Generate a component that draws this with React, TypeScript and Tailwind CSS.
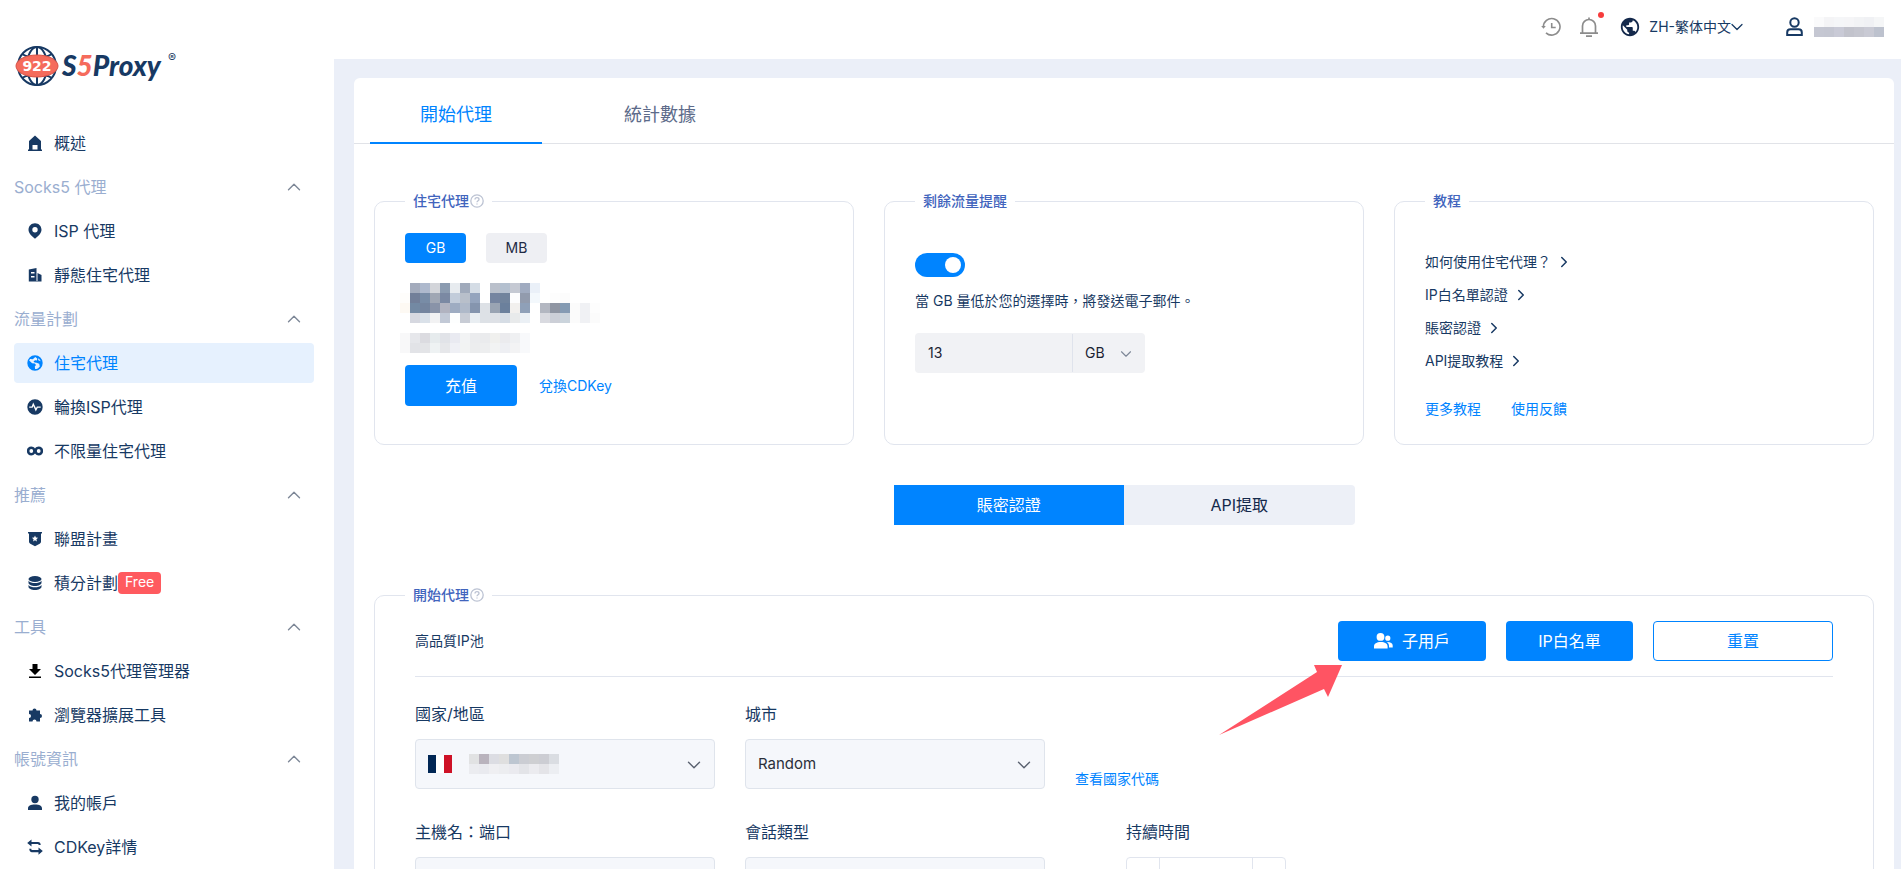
import React, { useState } from 'react';
import { ChevronDown, ChevronRight, ChevronUp } from 'lucide-react';
import { MdPublic } from 'react-icons/md';

const FONT = 'font-[Inter,"Noto_Sans_CJK_TC",sans-serif] font-normal';

type IconName = 'home' | 'pin' | 'building' | 'globe' | 'pulse' | 'infinity' | 'badge' | 'coins' | 'download' | 'puzzle' | 'user' | 'swap';

interface NavEntry {
    label: string;
    icon: IconName;
    active?: boolean;
    tag?: string;
}

interface NavSection {
    title?: string;
    items: NavEntry[];
}

const sections: NavSection[] = [
    { items: [{ label: '概述', icon: 'home' }] },
    {
        title: 'Socks5 代理',
        items: [
            { label: 'ISP 代理', icon: 'pin' },
            { label: '靜態住宅代理', icon: 'building' },
        ],
    },
    {
        title: '流量計劃',
        items: [
            { label: '住宅代理', icon: 'globe', active: true },
            { label: '輪換ISP代理', icon: 'pulse' },
            { label: '不限量住宅代理', icon: 'infinity' },
        ],
    },
    {
        title: '推薦',
        items: [
            { label: '聯盟計畫', icon: 'badge' },
            { label: '積分計劃', icon: 'coins', tag: 'Free' },
        ],
    },
    {
        title: '工具',
        items: [
            { label: 'Socks5代理管理器', icon: 'download' },
            { label: '瀏覽器擴展工具', icon: 'puzzle' },
        ],
    },
    {
        title: '帳號資訊',
        items: [
            { label: '我的帳戶', icon: 'user' },
            { label: 'CDKey詳情', icon: 'swap' },
        ],
    },
];

const navIcons: Record<IconName, React.ReactNode> = {
    home: <path fillRule="evenodd" d="M8 .5 14 6v8.500h1V16H1v-1.500h1V6L8 .5zM5.500 10v4.500h5V10h-5z" />,
    pin: <path fillRule="evenodd" d="M8 .3c3.800 0 6.500 2.900 6.500 6.500 0 3.700-3.400 6.400-6.500 8.900-3.100-2.500-6.500-5.200-6.500-8.900C1.500 3.200 4.200.3 8 .3zM8 4a2.700 2.700 0 1 0 0 5.400A2.700 2.700 0 0 0 8 4z" />,
    building: <path fillRule="evenodd" d="M1.800 2.500 9.500 1v13h1V6l4 2v6.500H1.800v-12zM4 5v1.500h3.500V5H4zm0 4v1.500h3.500V9H4z" />,
    globe: <path fillRule="evenodd" d="M8 .3a7.700 7.700 0 1 1 0 15.400A7.700 7.700 0 0 1 8 .3zM2.200 5.600l2.900 2.600 2.700.3 1.200 1.400-1.200 1.600.3 2.500c2 0 3.600-1 4.700-2.600l-.6-2.600-2.600-1-2-.4L6.500 6.200l1.800-1 1.700.400.2-2L8.300 2 5.800 4.200l-2.700-.2a6 6 0 0 0-.9 1.600zm8.900-2.400.200 2 2.400 1a6 6 0 0 0-2.600-3z" />,
    pulse: <path fillRule="evenodd" d="M8 .3a7.700 7.700 0 1 1 0 15.400A7.700 7.700 0 0 1 8 .3zM6.200 3.600 4.700 7.400H2.200v1.400h3.400l.8-1.800 2.400 5.400 1.900-3.600h3V7.400H9.900L9 9.300 6.200 3.600z" />,
    infinity: <path fillRule="evenodd" d="M4.300 3.500c1.500 0 2.700.7 3.700 1.900 1-1.200 2.200-1.900 3.700-1.900a4.500 4.500 0 0 1 0 9c-1.500 0-2.700-.7-3.700-1.900-1 1.200-2.200 1.900-3.700 1.900a4.500 4.500 0 0 1 0-9zm0 2.600a1.900 1.900 0 1 0 0 3.800 1.900 1.900 0 0 0 0-3.800zm7.400 0a1.900 1.900 0 1 0 0 3.800 1.900 1.900 0 0 0 0-3.800z" />,
    badge: <path fillRule="evenodd" d="M1 1h14v1.500h-1v8c0 1-.5 1.700-1.300 2.200L8 15.200l-4.700-2.500C2.500 12.200 2 11.500 2 10.500v-8H1V1zm7 3.500-.9 2-2.200.2 1.700 1.500-.5 2.200L8 9.300l1.900 1.100-.5-2.200 1.700-1.500-2.200-.2L8 4.500z" />,
    coins: (
        <>
            <ellipse cx="8" cy="4" rx="6.500" ry="3" />
            <path d="M1.500 5.800C3 7.800 5.300 8 8 8s5-.2 6.500-2.200v2C14.500 9.600 11.600 11 8 11S1.500 9.600 1.500 7.800v-2z" />
            <path d="M1.500 10C3 12 5.300 12.200 8 12.200s5-.2 6.500-2.200v1.800c0 1.900-2.900 3.200-6.500 3.200s-6.500-1.300-6.500-3.200V10z" />
        </>
    ),
    download: <path d="M5.500 1h5v5H14l-6 6-6-6h3.500V1zM2 13.500h12V15H2v-1.500z" />,
    puzzle: <path d="M2 3.500h3.500a2 2 0 1 1 4 0H13V7a2 2 0 1 1 0 4v3.500H9.500a2 2 0 0 0-4 0H2V11a2 2 0 0 0 0-4V3.500z" />,
    user: <path d="M8 .8a3.700 3.700 0 1 1 0 7.400A3.700 3.700 0 0 1 8 .8zM1 15v-1.500C1 11 3.500 9.600 8 9.600s7 1.400 7 3.900V15H1z" />,
    swap: <path d="M4.500.5v2.600H11c1.700 0 2.700 1 2.700 2.900h-2c0-.6-.3-.9-1-.9H4.500v2.300L.2 4 4.500.5zm7 8v2.500h-6.200c-.7 0-1-.4-1-1.200h-2c0 2.200 1 3.500 2.700 3.500h6.500v2.500L15.800 12 11.500 8.500z" />,
};

const Logo = () => {
    return (
        <svg width="164" height="44" viewBox="0 0 164 44" role="img" aria-label="922 S5Proxy">
            <g fill="none" stroke="#173963" strokeWidth="2">
                <circle cx="23" cy="22" r="19" />
                <ellipse cx="23" cy="22" rx="10" ry="19" />
                <path d="M23 3v38M8 10c8 5 22 5 30 0M8 34c8-5 22-5 30 0" />
            </g>
            <ellipse cx="23" cy="22" rx="21" ry="11" fill="#f56b5c" stroke="#d95347" strokeWidth="1" />
            <text x="23" y="27" textAnchor="middle" fill="#fff" fontFamily="DejaVu Sans" fontWeight="700" fontSize="14">922</text>
            <text x="48" y="32" fontFamily="Lato" fontWeight="900" fontStyle="italic" fontSize="28" fill="#173963">
                S<tspan fill="#f56b5c">5</tspan>Proxy
            </text>
            <text x="158" y="18" textAnchor="middle" fontFamily="Inter" fontSize="12" fill="#173963">®</text>
        </svg>
    );
};

const NavItem = ({ label, icon, active, tag }: NavEntry) => {
    return (
        <li>
            <a
                href="#"
                className={
                    active
                        ? 'flex h-10 items-center rounded bg-[#e6f1fe] pl-[13px] text-base text-[#0084ff]'
                        : 'flex h-10 items-center rounded pl-[13px] text-base text-[#173963]'
                }
            >
                <svg
                    className={icon === 'download' ? 'mr-[11px] size-4 fill-black' : 'mr-[11px] size-4 fill-current'}
                    viewBox="0 0 16 16"
                    aria-hidden="true"
                >
                    {navIcons[icon]}
                </svg>
                {label}
                {tag && <span className="h-[22px] rounded bg-[#ff5a5f] px-[7px] text-sm leading-5 text-white">{tag}</span>}
            </a>
        </li>
    );
};

const Sidebar = () => {
    return (
        <aside className="w-[334px] shrink-0 bg-white pt-[44px] pl-[14px]">
            <Logo />
            <nav className="mt-[35px] flex w-[300px] flex-col gap-1">
                {sections.map((section) => (
                    <div key={section.title ?? 'main'} className="flex flex-col gap-1">
                        {section.title && (
                            <button type="button" className="flex h-10 items-center justify-between pr-[9px] text-base text-[#9aaed0]">
                                {section.title}
                                <ChevronUp className="size-[22px] text-[#7d8797]" strokeWidth={1.5} />
                            </button>
                        )}
                        <ul className="flex flex-col gap-1">
                            {section.items.map((item) => <NavItem key={item.label} {...item} />)}
                        </ul>
                    </div>
                ))}
            </nav>
        </aside>
    );
};

// Masked values are shown as rows of 10px colour cells
const Mosaic = ({ rows }: { rows: string[] }) => {
    return (
        <div aria-hidden="true">
            {rows.map((row, y) => (
                <div key={y} className="flex">
                    {row.split(' ').map((color, x) => (
                        <span key={x} className="size-[10px]" style={{ backgroundColor: color === '-' ? undefined : `#${color}` }} />
                    ))}
                </div>
            ))}
        </div>
    );
};

const balanceMask = [
    '- a3abbc aeb9cd d3d5da 8b9bb0 e7ebef a0aabb d4dce5 - bac0cb b4c0cf c5c9d3 a0abc0 eaf0f8',
    'fefdfb 727f99 788ca6 a0a7b4 7b89a3 c2ccda b8bfca 94a4bd - 7685a0 71849d fdfdfe 929bad f3f8fc - fdfdfd fcfcfc',
    'fdf9f3 7389a3 74859f 8993a8 b1b3c0 9eacc2 afb9c9 8595ae dde1e6 9aa4b3 6b809c f2f0ee 8fa0b8 - b3b7c1 8f95a2 859bb3 fbfbfb f0f1f4 fdfdfd',
    '- d6d8e0 dae1e9 f2f2f3 c2c9d6 fdfefe c8ccd5 e9eef2 dde1e6 dee1e6 d6dde5 e8eaeb ebf0f5 - d9dae0 cccfd7 cbd4dc fbfbfb f0f1f4 fbfbfb',
];

const expiryMask = [
    'f8f8f9 e6e7eb dbdbe0 e6ebed e1e3e8 e9eaf1 f2f3f4 ebecee eaebed f0f0ee ebebee eff0f2 f8f9fb',
    'f8f8f9 e2e3e7 e3e4e7 eef2f3 e6e7ea eff0f5 f2f3f3 ecedee edeeef f2f3f3 eeeff3 f3f3f4 f8f9fb',
];

const countryMask = [
    'e1e2e3 b9b3bd dcdde3 dfdfdf bdc6d1 cbcdd3 cecfd2 cccdd3 dadde2',
    'ebecf0 e9eaef efeff2 ecedf0 eaeaef e3e4e8 ebebef e4e4e8 eceef2',
];

const userMask = [
    'fafafb f4f4f6 f5f6f8 f5f5f7 f2f3f5 f0f1f4 f5f6f7',
    'c5c7d2 c4c6d1 c9cad6 c2c3cc c5c6cf c9cad4 bdc2ce',
];

const Header = () => {
    return (
        <header className="flex h-[59px] items-center justify-end bg-white pr-[17px] pb-[6px]">
            <button type="button" aria-label="歷史" className="text-[#8c8c8c]">
                <svg className="size-5" viewBox="0 0 20 20" fill="none" stroke="currentColor" strokeWidth="1.600" aria-hidden="true">
                    <path d="M2.400 10A8.300 8.300 0 1 1 5 15.800M10.700 6v4.500h4" />
                    <path d="M.2 9h4.600l-2.300 2.800z" fill="currentColor" stroke="none" />
                </svg>
            </button>
            <button type="button" aria-label="通知" className="relative ml-[18px] text-[#8c8c8c]">
                <svg className="size-5" viewBox="0 0 20 20" fill="none" stroke="currentColor" strokeWidth="1.700" aria-hidden="true">
                    <path d="M10 .5v2M3.500 16V9a6.500 6.500 0 0 1 13 0v7M1 16.200h18M7 19.100h6" />
                </svg>
                <span className="absolute -top-[5px] -right-[5px] size-[6px] rounded-full bg-[#f73c3c]" />
            </button>
            <button type="button" className="ml-[20px] flex items-center text-sm text-[#173963]">
                <MdPublic className="mr-[8px] size-[22px] text-[#14294b]" />
                ZH-繁体中文
                <ChevronDown className="-mx-1 size-5" strokeWidth={1.5} />
            </button>
            <button type="button" aria-label="帳戶" className="ml-[43px] flex items-center gap-[11px] text-[#173963]">
                <svg className="h-[19px] w-[17px]" viewBox="0 0 17 19" fill="none" stroke="currentColor" strokeWidth="2" aria-hidden="true">
                    <circle cx="8.500" cy="5.500" r="4.200" />
                    <path d="M1.200 18v-2.500c0-2 1.300-3.200 3.300-3.200h8c2 0 3.300 1.200 3.300 3.200V18z" />
                </svg>
                <Mosaic rows={userMask} />
            </button>
        </header>
    );
};

const HelpIcon = () => {
    return (
        <svg className="size-[14px]" viewBox="0 0 14 14" fill="none" stroke="#bcc3d3" strokeWidth="1.300" aria-hidden="true">
            <circle cx="7" cy="7" r="6.200" />
            <path d="M5 5.600C5 4.400 5.800 3.700 7 3.700s2 .7 2 1.700c0 1.300-2 1.400-2 2.900M7 9.400v1.200" />
        </svg>
    );
};

interface PanelProps {
    title: string;
    help?: boolean;
    className?: string;
    children: React.ReactNode;
}

const Panel = ({ title, help, className = '', children }: PanelProps) => {
    return (
        <fieldset className={`min-w-0 rounded-[10px] border border-[#e1e5ee] ${className}`}>
            <legend className="ml-[30px] px-2 text-sm font-medium text-[#4164bd]">
                <span className="flex items-center gap-px">
                    {title}
                    {help && <HelpIcon />}
                </span>
            </legend>
            {children}
        </fieldset>
    );
};

const BalancePanel = () => {
    const [unit, setUnit] = useState('GB');
    return (
        <Panel title="住宅代理" help className="h-[254px]">
            <div className="pt-[22px] pl-[30px]">
                <div className="flex gap-5">
                    {['GB', 'MB'].map((u) => (
                        <button
                            key={u}
                            type="button"
                            onClick={() => setUnit(u)}
                            className={
                                u === unit
                                    ? 'h-[30px] w-[61px] rounded bg-[#0084ff] text-sm text-white'
                                    : 'h-[30px] w-[61px] rounded bg-[#eeeff3] text-sm text-[#1f2b45]'
                            }
                        >
                            {u}
                        </button>
                    ))}
                </div>
                <div className="mt-5 -ml-[5px] flex flex-col gap-[10px]">
                    <Mosaic rows={balanceMask} />
                    <Mosaic rows={expiryMask} />
                </div>
                <div className="mt-[12px] flex items-center gap-[22px]">
                    <button type="button" className="h-[41px] w-[112px] rounded bg-[#0084ff] text-base text-white">充值</button>
                    <a href="#" className="text-sm text-[#0084ff]">兌換CDKey</a>
                </div>
            </div>
        </Panel>
    );
};

const ReminderPanel = () => {
    return (
        <Panel title="剩餘流量提醒" className="h-[254px]">
            <div className="pt-[42px] pl-[30px]">
                <label className="block w-fit">
                    <input type="checkbox" defaultChecked aria-label="剩餘流量提醒" className="peer sr-only" />
                    <span className="flex h-6 w-[50px] items-center justify-start rounded-full bg-[#c3cad8] px-1 peer-checked:justify-end peer-checked:bg-[#0084ff]">
                        <span className="size-4 rounded-full bg-white" />
                    </span>
                </label>
                <p className="mt-[14px] text-sm text-[#173963]">當 GB 量低於您的選擇時，將發送電子郵件。</p>
                <div className="mt-[22px] flex h-10 w-[230px] rounded-sm bg-[#f1f2f5] text-[#1c2333]">
                    <input type="text" aria-label="流量" defaultValue="13" className="min-w-0 flex-1 pl-[13px] text-sm" />
                    <div className="relative my-px w-[73px] border-l border-[#dfe3ec]">
                        <select aria-label="單位" className="size-full appearance-none pl-3 text-sm">
                            <option>GB</option>
                            <option>MB</option>
                        </select>
                        <ChevronDown className="pointer-events-none absolute top-[11px] right-[10px] size-[18px] text-[#7d8797]" strokeWidth={1.5} />
                    </div>
                </div>
            </div>
        </Panel>
    );
};

const guides = ['如何使用住宅代理？', 'IP白名單認證', '賬密認證', 'API提取教程'];

const GuidePanel = () => {
    return (
        <Panel title="教程" className="h-[254px]">
            <div className="pt-[41px] pl-[30px]">
                <ul className="flex flex-col gap-[13px] text-sm text-[#173963]">
                    {guides.map((guide) => (
                        <li key={guide}>
                            <a href="#" className="flex items-center gap-1">
                                {guide}
                                <ChevronRight className="size-[18px]" />
                            </a>
                        </li>
                    ))}
                </ul>
                <div className="mt-[28px] flex gap-[30px] text-sm text-[#0084ff]">
                    <a href="#">更多教程</a>
                    <a href="#">使用反饋</a>
                </div>
            </div>
        </Panel>
    );
};

interface FieldProps {
    id: string;
    label: string;
    className?: string;
    children: React.ReactNode;
}

const Field = ({ id, label, className = '', children }: FieldProps) => {
    return (
        <div className={className}>
            <label htmlFor={id} className="mb-[13px] block text-base text-[#173963]">{label}</label>
            {children}
        </div>
    );
};

const SelectBox = ({ id, value, children }: { id: string; value?: string; children?: React.ReactNode }) => {
    return (
        <div className="relative h-[50px] rounded border border-[#dfe4ec] bg-[#f5f7fb]">
            <select id={id} className="size-full appearance-none pl-3 text-[15px] text-[#2b2f3a]">
                <option>{value}</option>
            </select>
            {children}
            <ChevronDown className="pointer-events-none absolute top-[14px] right-[9px] size-[22px] text-[#59616f]" strokeWidth={1.5} />
        </div>
    );
};

const FranceFlag = () => {
    return (
        <svg width="24" height="18" viewBox="0 0 24 18" aria-hidden="true">
            <path fill="#002654" d="M0 0h8v18H0z" />
            <path fill="#fff" d="M8 0h8v18H8z" />
            <path fill="#ce1126" d="M16 0h8v18h-8z" />
        </svg>
    );
};

const ProxyForm = () => {
    return (
        <Panel title="開始代理" help className="mt-[60px]">
            <div className="px-10 pb-10">
                <div className="flex items-center justify-between border-b border-[#e1e5ee] pt-4 pb-[15px]">
                    <h2 className="text-sm text-[#173963]">高品質IP池</h2>
                    <div className="relative flex gap-5">
                        <button type="button" className="flex h-10 w-[148px] items-center justify-center gap-[9px] rounded bg-[#0084ff] text-base text-white">
                            <svg className="h-4 w-[19px] fill-current" viewBox="0 0 19 16" aria-hidden="true">
                                <path d="M6.500 0a3.900 3.900 0 1 1 0 7.800 3.900 3.900 0 0 1 0-7.800zM0 15.500v-2C0 10.500 2.600 9 6.800 9s6.800 1.500 6.800 4.500v2z" />
                                <path d="M13.800 2.600a2.600 2.600 0 1 1 0 5.200 2.600 2.600 0 0 1 0-5.200zM15 14.500v-1.300c0-2-.8-3.300-2.200-4.200 3.800-.1 5.900 1.200 5.900 3.600v1.900z" />
                            </svg>
                            子用戶
                        </button>
                        <button type="button" className="h-10 w-[127px] rounded bg-[#0084ff] text-base text-white">IP白名單</button>
                        <button type="button" className="h-10 w-[180px] rounded border border-[#0084ff] text-base text-[#0084ff]">重置</button>
                        <svg className="absolute top-[43px] -left-[119px] h-[71px] w-[124px]" viewBox="0 0 124 71" aria-hidden="true">
                            <path fill="#ff5463" d="M0 71 98 8 95 1h28l-14 32-4-8z" />
                        </svg>
                    </div>
                </div>
                <div className="mt-[25px] flex items-end gap-[30px]">
                    <Field id="country" label="國家/地區" className="w-[300px]">
                        <SelectBox id="country">
                            <div className="pointer-events-none absolute top-[14px] left-3 flex items-center gap-[17px]">
                                <FranceFlag />
                                <Mosaic rows={countryMask} />
                            </div>
                        </SelectBox>
                    </Field>
                    <Field id="city" label="城市" className="w-[300px]">
                        <SelectBox id="city" value="Random" />
                    </Field>
                    <a href="#" className="text-sm text-[#0084ff]">查看國家代碼</a>
                </div>
                <div className="mt-[31px] flex items-end gap-[30px]">
                    <Field id="host" label="主機名：端口" className="w-[300px]">
                        <SelectBox id="host" />
                    </Field>
                    <Field id="session" label="會話類型" className="w-[300px]">
                        <SelectBox id="session" />
                    </Field>
                    <Field id="duration" label="持續時間" className="ml-[51px] w-40">
                        <div className="flex h-[50px] rounded border border-[#e1e5ee]">
                            <button type="button" aria-label="減少" className="w-8" />
                            <input id="duration" type="text" className="min-w-0 flex-1 border-x border-[#e1e5ee]" />
                            <button type="button" aria-label="增加" className="w-8" />
                        </div>
                    </Field>
                </div>
            </div>
        </Panel>
    );
};

export default function App() {
    return (
        <div lang="zh-Hant" className={`flex h-screen overflow-hidden bg-[#ebeff8] ${FONT}`}>
            <Sidebar />
            <div className="min-w-0 flex-1">
                <Header />
                <main className="mt-[19px] mr-[7px] ml-5 rounded-md bg-white">
                    <div role="tablist" className="flex h-[66px] gap-8 border-b border-[#e1e3e8] pl-4 text-lg">
                        <button type="button" role="tab" aria-selected="true" className="h-[66px] w-[172px] border-b-2 border-[#0084ff] pt-[10px] text-[#0084ff]">開始代理</button>
                        <button type="button" role="tab" aria-selected="false" className="w-[172px] pt-2 text-[#5d6b8a]">統計數據</button>
                    </div>
                    <div className="px-5 pt-[47px]">
                        <div className="grid grid-cols-3 gap-[30px]">
                            <BalancePanel />
                            <ReminderPanel />
                            <GuidePanel />
                        </div>
                        <div role="tablist" className="mx-auto mt-10 flex w-[461px]">
                            <button type="button" role="tab" aria-selected="true" className="h-10 flex-1 bg-[#0084ff] text-base text-white">賬密認證</button>
                            <button type="button" role="tab" aria-selected="false" className="h-10 flex-1 rounded-r-sm bg-[#edf0f7] text-base text-[#14294b]">API提取</button>
                        </div>
                        <ProxyForm />
                    </div>
                </main>
            </div>
        </div>
    );
}
